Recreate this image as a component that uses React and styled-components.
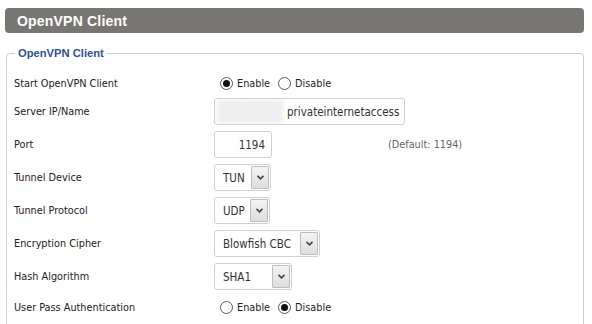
import React from "react";
import styled, { createGlobalStyle } from "styled-components";

const Global = createGlobalStyle`
  html, body { margin: 0; padding: 0; background: #fff; }
  body { font-family: "DejaVu Sans Condensed", "DejaVu Sans", Tahoma, sans-serif; font-size: 10.8px; color: #222; }
`;

const Page = styled.div`
  width: 579px;
  padding: 8px 0 0 5px;
`;

const Header = styled.div`
  height: 25px;
  background: #777673;
  border-radius: 4px;
  display: flex;
  align-items: center;
  padding-left: 12px;
  color: #fff;
  font-family: "Liberation Sans", Arial, sans-serif;
  font-weight: bold;
  font-size: 14px;
  letter-spacing: 0.2px;
`;

const Fieldset = styled.fieldset`
  margin: 13px 0 0 1px;
  border: 1px solid #cccccc;
  border-radius: 4px;
  padding: 14px 8px 20px 7px;
  min-width: 0;
`;

const Legend = styled.legend`
  padding: 0 3px;
  margin-left: 1px;
  font-family: "Liberation Sans", Arial, sans-serif;
  font-weight: bold;
  font-size: 11.2px;
  color: #2e4f9a;
  line-height: 14px;
`;

const Rows = styled.div`
  display: flex;
  flex-direction: column;
  gap: 6px;
`;

const Row = styled.div`
  display: grid;
  grid-template-columns: 200px 1fr;
  align-items: center;
  height: ${(p) => p.$h || 27}px;
  margin-top: ${(p) => p.$mt || 0}px;
`;

const Label = styled.div`
  color: #222;
`;

const Field = styled.div`
  display: flex;
  align-items: center;
  padding-left: ${(p) => p.$pl || 0}px;
`;

const RadioItem = styled.label`
  display: inline-flex;
  align-items: center;
  margin-left: ${(p) => p.$ml || 0}px;
`;

const RadioCircle = styled.span`
  box-sizing: border-box;
  width: 13px;
  height: 13px;
  border-radius: 50%;
  border: 1px solid #5a5a5a;
  background: #fff;
  display: inline-flex;
  align-items: center;
  justify-content: center;
  margin-right: 4px;
  &::after {
    content: "";
    width: 7px;
    height: 7px;
    border-radius: 50%;
    background: ${(p) => (p.$checked ? "#111" : "transparent")};
  }
`;

const TextBox = styled.div`
  box-sizing: border-box;
  width: ${(p) => p.$w}px;
  height: 27px;
  border: 1px solid #d0d0d0;
  border-radius: 3px;
  background: #fff;
  display: flex;
  align-items: center;
  justify-content: ${(p) => (p.$right ? "flex-end" : "flex-start")};
  padding: 0 ${(p) => (p.$right ? 6 : 1)}px 0 0;
  overflow: hidden;
  white-space: nowrap;
  font-size: 11.5px;
  color: #333;
`;

const Blur = styled.span`
  flex: none;
  width: 66px;
  height: 23px;
  margin: 0 4px 0 2px;
  background: #eeeeee;
  filter: blur(2px);
`;

const Hint = styled.span`
  margin-left: 116px;
  color: #666;
`;

const Select = styled.div`
  box-sizing: border-box;
  width: ${(p) => p.$w}px;
  height: 27px;
  border: 1px solid #d0d0d0;
  border-radius: 3px;
  background: #fff;
  display: flex;
  align-items: stretch;
  font-size: 11.5px;
  color: #333;
`;

const SelectValue = styled.div`
  flex: 1;
  display: flex;
  align-items: center;
  padding-left: 8px;
  white-space: nowrap;
`;

const SelectArrow = styled.div`
  width: 16px;
  margin: 1px;
  border: 1px solid #bdbdbd;
  border-radius: 1px;
  background: linear-gradient(#f4f4f4, #dedede);
  display: flex;
  align-items: center;
  justify-content: center;
`;

const Chevron = () => (
  <svg width="7" height="5" viewBox="0 0 7 5">
    <path d="M0.5 0.8 L3.5 3.8 L6.5 0.8" fill="none" stroke="#444" strokeWidth="1.6" />
  </svg>
);

const Radios = ({ checked }) => (
  <Field $pl={6}>
    <RadioItem>
      <RadioCircle $checked={checked === 0} />
      Enable
    </RadioItem>
    <RadioItem $ml={8}>
      <RadioCircle $checked={checked === 1} />
      Disable
    </RadioItem>
  </Field>
);

const Dropdown = ({ w, value }) => (
  <Select $w={w}>
    <SelectValue>{value}</SelectValue>
    <SelectArrow>
      <Chevron />
    </SelectArrow>
  </Select>
);

export default function App() {
  return (
    <>
      <Global />
      <Page>
        <Header>OpenVPN Client</Header>
        <Fieldset>
          <Legend>OpenVPN Client</Legend>
          <Rows>
            <Row $h={18}>
              <Label>Start OpenVPN Client</Label>
              <Radios checked={0} />
            </Row>
            <Row>
              <Label>Server IP/Name</Label>
              <Field>
                <TextBox $w={191}>
                  <Blur />
                  privateinternetaccess
                </TextBox>
              </Field>
            </Row>
            <Row>
              <Label>Port</Label>
              <Field>
                <TextBox $w={58} $right>1194</TextBox>
                <Hint>(Default: 1194)</Hint>
              </Field>
            </Row>
            <Row>
              <Label>Tunnel Device</Label>
              <Field>
                <Dropdown w={57} value="TUN" />
              </Field>
            </Row>
            <Row>
              <Label>Tunnel Protocol</Label>
              <Field>
                <Dropdown w={56} value="UDP" />
              </Field>
            </Row>
            <Row>
              <Label>Encryption Cipher</Label>
              <Field>
                <Dropdown w={106} value="Blowfish CBC" />
              </Field>
            </Row>
            <Row>
              <Label>Hash Algorithm</Label>
              <Field>
                <Dropdown w={78} value="SHA1" />
              </Field>
            </Row>
            <Row $h={18} $mt={2}>
              <Label>User Pass Authentication</Label>
              <Radios checked={1} />
            </Row>
          </Rows>
        </Fieldset>
      </Page>
    </>
  );
}
